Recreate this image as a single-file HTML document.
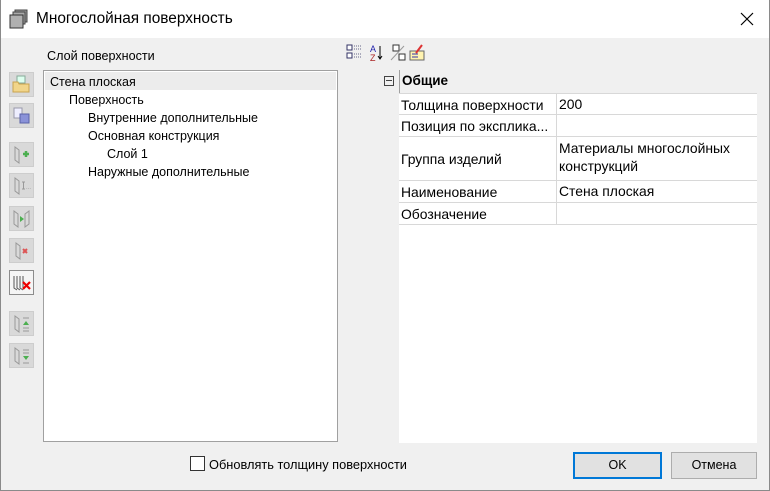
<!DOCTYPE html>
<html><head><meta charset="utf-8"><style>
*{margin:0;padding:0;box-sizing:border-box}
body{width:770px;height:491px;overflow:hidden;background:#f0f0f0;font-family:"Liberation Sans","DejaVu Sans",sans-serif;font-size:12px;color:#000;position:relative}
.abs{position:absolute}
.title{left:0;top:0;width:770px;height:38px;background:#fff}
.sb{position:absolute;left:9px;width:25px;height:25px;background:#d9d9d9;border:1px solid #cdcdcd}
.tree{left:43px;top:70px;width:295px;height:372px;background:#fff;border:1px solid #a0a0a0}
.ti{position:absolute;height:18px;line-height:18px;font-size:12.5px}
.row{position:absolute;left:399px;width:358px;border-bottom:1px solid #d8d8d8;background:#fff;font-size:13.9px}
.row .k{position:absolute;left:2px;}
.row .v{position:absolute;left:160px;}
.row .d{position:absolute;left:157px;top:0;bottom:0;width:1px;background:#d8d8d8}
.btn{position:absolute;top:452px;height:27px;background:#e1e1e1;border:1px solid #adadad;text-align:center;line-height:25px;font-size:12.5px}
</style></head><body>
<div class="abs title"></div>
<div class="abs" style="left:0;top:0;width:770px;height:491px;border:1px solid #8a8a8a;border-top:none"></div>
<svg class="abs" style="left:9px;top:9px" width="20" height="20"><rect x="6" y="1" width="12" height="12" fill="#999" stroke="#444"/><rect x="4" y="3" width="12" height="12" fill="#aaa" stroke="#444"/><rect x="1" y="6" width="13" height="13" fill="#b0b0b0" stroke="#333"/></svg>
<div class="abs" style="left:36px;top:9px;font-size:15.4px;line-height:20px">Многослойная поверхность</div>
<svg class="abs" style="left:740px;top:12px" width="14" height="14"><path d="M1 1L13 13M13 1L1 13" stroke="#000" stroke-width="1.2"/></svg>

<div class="abs" style="left:47px;top:49px;font-size:12.6px">Слой поверхности</div>

<div class="sb" style="top:72px"><svg width="23" height="23"><rect x="7" y="3" width="8" height="7" fill="#dfe" stroke="#8a9"/><path d="M3 9h5l1 2h10v8H3z" fill="#f1d58a" stroke="#c9a34e"/></svg></div>
<div class="sb" style="top:103px"><svg width="23" height="23"><rect x="4" y="4" width="8" height="10" fill="#eef" stroke="#99a"/><rect x="10" y="10" width="9" height="9" fill="#8a92d8" stroke="#5a62a8"/></svg></div>
<div class="sb" style="top:142px"><svg width="23" height="23"><path d="M5 4l4 3v13l-4-3z" fill="none" stroke="#999"/><path d="M13 11h6M16 8v6" stroke="#4caf50" stroke-width="2.5"/></svg></div>
<div class="sb" style="top:173px"><svg width="23" height="23"><path d="M5 4l4 3v13l-4-3z" fill="none" stroke="#999"/><path d="M12 8h3M13.5 8v7M12 15h3" stroke="#999"/><text x="16" y="15" font-size="6" fill="#999">...</text></svg></div>
<div class="sb" style="top:206px"><svg width="23" height="23"><path d="M4 4l4 3v13l-4-3zM15 7l4-3v13l-4 3z" fill="none" stroke="#999"/><path d="M10 9l4 3-4 3z" fill="#4caf50"/></svg></div>
<div class="sb" style="top:238px"><svg width="23" height="23"><path d="M6 4l4 3v13l-4-3z" fill="none" stroke="#999"/><path d="M13 10l4 4M17 10l-4 4" stroke="#d55" stroke-width="2"/></svg></div>
<div class="sb" style="top:270px;background:#f5f5f5;border-color:#8c8c8c"><svg width="23" height="23"><path d="M4 5v12l3 2M7 5v12l3 2M10 5v12l3 2M13 5v12" stroke="#555" fill="none"/><path d="M13 11l7 7M20 11l-7 7" stroke="#e00" stroke-width="2.2"/></svg></div>
<div class="sb" style="top:311px"><svg width="23" height="23"><path d="M5 4l4 3v13l-4-3z" fill="none" stroke="#999"/><path d="M13 6h6M13 16h6M13 19h6" stroke="#999"/><path d="M13 13l3-4 3 4z" fill="#4caf50"/></svg></div>
<div class="sb" style="top:343px"><svg width="23" height="23"><path d="M5 4l4 3v13l-4-3z" fill="none" stroke="#999"/><path d="M13 6h6M13 9h6M13 19h6" stroke="#999"/><path d="M13 12l3 4 3-4z" fill="#4caf50"/></svg></div>

<div class="abs tree">
<div class="abs" style="left:1px;top:1px;width:291px;height:18px;background:#ececec"></div>
<div class="ti" style="left:6px;top:2px">Стена плоская</div>
<div class="ti" style="left:25px;top:20px">Поверхность</div>
<div class="ti" style="left:44px;top:38px">Внутренние дополнительные</div>
<div class="ti" style="left:44px;top:56px">Основная конструкция</div>
<div class="ti" style="left:63px;top:74px">Слой 1</div>
<div class="ti" style="left:44px;top:92px">Наружные дополнительные</div>
</div>

<svg class="abs" style="left:346px;top:43px" width="90" height="20">
<rect x="1" y="2" width="5" height="5" fill="#fff" stroke="#336"/><rect x="1" y="10" width="5" height="5" fill="#fff" stroke="#336"/><path d="M8 3h7M8 6h7M8 11h7M8 14h7" stroke="#668" stroke-dasharray="1 1"/>
<text x="24" y="9" font-size="9" fill="#22a" font-family="Liberation Sans">A</text><text x="24" y="18" font-size="9" fill="#a22" font-family="Liberation Sans">Z</text><path d="M34 3v13M32 13l2 3 2-3" stroke="#000" fill="none"/>
<rect x="47" y="2" width="6" height="6" fill="#fff" stroke="#333"/><path d="M45 17L58 3" stroke="#999"/><rect x="53" y="11" width="6" height="6" fill="#fff" stroke="#333"/>
<rect x="64" y="8" width="14" height="9" fill="#fff3b0" stroke="#666"/><path d="M66 11h6M66 14h6" stroke="#33a"/><path d="M70 10l6-8" stroke="#d33" stroke-width="2"/>
</svg>

<div class="abs" style="left:399px;top:70px;width:358px;height:373px;background:#fff"></div>
<div class="abs" style="left:399px;top:70px;width:358px;height:23px;background:#f0f0f0;border-left:1px solid #a0a0a0"></div>
<div class="abs" style="left:384px;top:76px;width:10px;height:10px;border:1px solid #444"></div>
<div class="abs" style="left:386px;top:80px;width:6px;height:1px;background:#444"></div>
<div class="abs" style="left:402px;top:73px;font-weight:bold;font-size:13.5px">Общие</div>
<div class="abs" style="left:399px;top:93px;width:1px;height:132px;background:#d8d8d8"></div>
<div class="row" style="top:93px;height:22px;border-top:1px solid #d8d8d8"><div class="d"></div><span class="k" style="top:3px">Толщина поверхности</span><span class="v" style="top:2px">200</span></div>
<div class="row" style="top:115px;height:22px"><div class="d"></div><span class="k" style="top:3px">Позиция по эксплика...</span></div>
<div class="row" style="top:137px;height:44px"><div class="d"></div><span class="k" style="top:14px">Группа изделий</span><span class="v" style="top:2px;line-height:18px">Материалы многослойных<br>конструкций</span></div>
<div class="row" style="top:181px;height:22px"><div class="d"></div><span class="k" style="top:3px">Наименование</span><span class="v" style="top:2px">Стена плоская</span></div>
<div class="row" style="top:203px;height:22px"><div class="d"></div><span class="k" style="top:3px">Обозначение</span></div>

<div class="abs" style="left:190px;top:456px;width:15px;height:15px;border:1px solid #333;background:#fff"></div>
<div class="abs" style="left:209px;top:457px;font-size:12.8px">Обновлять толщину поверхности</div>
<div class="btn" style="left:573px;width:89px;border:2px solid #0078d7;line-height:23px">OK</div>
<div class="btn" style="left:671px;width:86px">Отмена</div>
</body></html>
